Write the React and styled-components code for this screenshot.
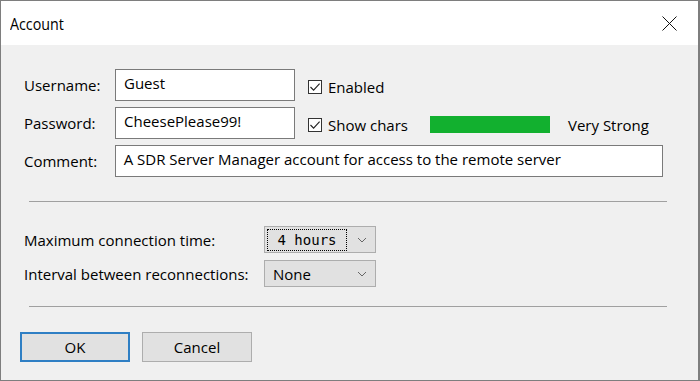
import React from 'react';
import styled, { createGlobalStyle } from 'styled-components';

const GlobalStyle = createGlobalStyle`
  body {
    margin: 0;
    font-family: "Open Sans", "Noto Sans", sans-serif;
    color: #000;
  }
`;

const Check = () => (
  <svg width="12" height="12" viewBox="0 0 12 12">
    <path d="M1.5 6 L4.6 9.2 L10.6 2.6" fill="none" stroke="#222" strokeWidth="1.1" />
  </svg>
);

const Chevron = () => (
  <svg width="10" height="6" viewBox="0 0 10 6">
    <path d="M1 1 L5 5 L9 1" fill="none" stroke="#666" strokeWidth="1" />
  </svg>
);

const Account = () => (
  <Window>
    <TitleBar>
      <Title>Account</Title>
      <Close>
        <svg width="15" height="15" viewBox="0 0 15 15">
          <path d="M0.5 0.5 L14.5 14.5 M14.5 0.5 L0.5 14.5" stroke="#111" strokeWidth="1" />
        </svg>
      </Close>
    </TitleBar>
    <Body>
      <Fields>
        <Row>
          <Label>Username:</Label>
          <Input>Guest</Input>
          <CheckItem>
            <Box><Check /></Box>
            Enabled
          </CheckItem>
        </Row>
        <Row>
          <Label>Password:</Label>
          <Input>CheesePlease99!</Input>
          <CheckItem>
            <Box><Check /></Box>
            Show chars
          </CheckItem>
          <Strength />
          <StrengthText>Very Strong</StrengthText>
        </Row>
        <Row>
          <Label>Comment:</Label>
          <Input $wide>A SDR Server Manager account for access to the remote server</Input>
        </Row>
      </Fields>
      <Separator $top={24} $bottom={24} />
      <Options>
        <OptionRow>
          <OptionLabel>Maximum connection time:</OptionLabel>
          <Select>
            <Focused>4 hours</Focused>
            <Chevron />
          </Select>
        </OptionRow>
        <OptionRow>
          <OptionLabel>Interval between reconnections:</OptionLabel>
          <Select>
            <Value>None</Value>
            <Chevron />
          </Select>
        </OptionRow>
      </Options>
      <Separator $top={19} $bottom={25} />
      <Buttons>
        <Button $default>OK</Button>
        <Button>Cancel</Button>
      </Buttons>
    </Body>
  </Window>
);

export default function App() {
  return (
    <>
      <GlobalStyle />
      <Account />
    </>
  );
}

const Window = styled.div`
  width: 700px;
  height: 381px;
  box-sizing: border-box;
  border: 1px solid #7e7e7e;
  border-right-width: 2px;
  display: flex;
  flex-direction: column;
  background: #f0f0f0;
`;
const TitleBar = styled.div`
  height: 44px;
  background: #fff;
  display: flex;
  align-items: center;
  justify-content: space-between;
  padding: 0 21px 0 9px;
`;
const Title = styled.span`
  font-size: 17px;
  transform: scaleX(0.84);
  transform-origin: left center;
  margin-top: 1px;
`;
const Close = styled.span`
  display: flex;
  margin-top: 1px;
`;
const Body = styled.div`
  flex: 1;
  padding: 24px 35px 0 19px;
  font-size: 15px;
`;
const Fields = styled.div`
  display: flex;
  flex-direction: column;
  gap: 6px;
  padding-left: 4px;
`;
const Row = styled.div`
  display: flex;
  align-items: center;
  height: 32px;
`;
const Label = styled.span`
  width: 91px;
`;
const Input = styled.div`
  box-sizing: border-box;
  width: ${p => (p.$wide ? '550px' : '180px')};
  height: 32px;
  background: #fff;
  border: 1px solid #7a7a7a;
  padding: 0 8px 4px;
  display: flex;
  align-items: center;
  white-space: nowrap;
`;
const CheckItem = styled.label`
  display: flex;
  align-items: center;
  gap: 6px;
  margin-left: 13px;
  margin-top: 3px;
`;
const Box = styled.span`
  width: 14px;
  height: 14px;
  box-sizing: border-box;
  border: 1px solid #333;
  background: #fff;
  display: flex;
  align-items: center;
  justify-content: center;
`;
const Strength = styled.div`
  width: 120px;
  height: 17px;
  background: #12b02f;
  margin-left: 22px;
  margin-top: 2px;
`;
const StrengthText = styled.span`
  margin-left: 18px;
  margin-top: 3px;
`;
const Separator = styled.div`
  height: 1px;
  background: #a0a0a0;
  margin: ${p => p.$top}px 0 ${p => p.$bottom}px 9px;
  width: 638px;
`;
const Options = styled.div`
  display: flex;
  flex-direction: column;
  gap: 7px;
  padding-left: 4px;
`;
const OptionRow = styled.div`
  display: flex;
  align-items: center;
  height: 27px;
`;
const OptionLabel = styled.span`
  width: 240px;
`;
const Select = styled.div`
  box-sizing: border-box;
  width: 112px;
  height: 27px;
  background: #e1e1e1;
  border: 1px solid #adadad;
  display: flex;
  align-items: center;
  justify-content: space-between;
  padding: 2px 8px 2px 2px;
`;
const Focused = styled.span`
  box-sizing: border-box;
  height: 22px;
  width: 80px;
  border: 1px dotted #000;
  display: flex;
  align-items: center;
  justify-content: center;
  font-family: "DejaVu Sans Mono", "Liberation Mono", monospace;
  font-size: 14px;
`;
const Value = styled.span`
  padding-left: 6px;
`;
const Buttons = styled.div`
  display: flex;
  gap: 12px;
`;
const Button = styled.button`
  box-sizing: border-box;
  width: 110px;
  height: 30px;
  background: #e1e1e1;
  border: ${p => (p.$default ? '2px solid #2f7fc4' : '1px solid #adadad')};
  font-family: inherit;
  font-size: 15px;
  color: #000;
  padding: 0;
`;
